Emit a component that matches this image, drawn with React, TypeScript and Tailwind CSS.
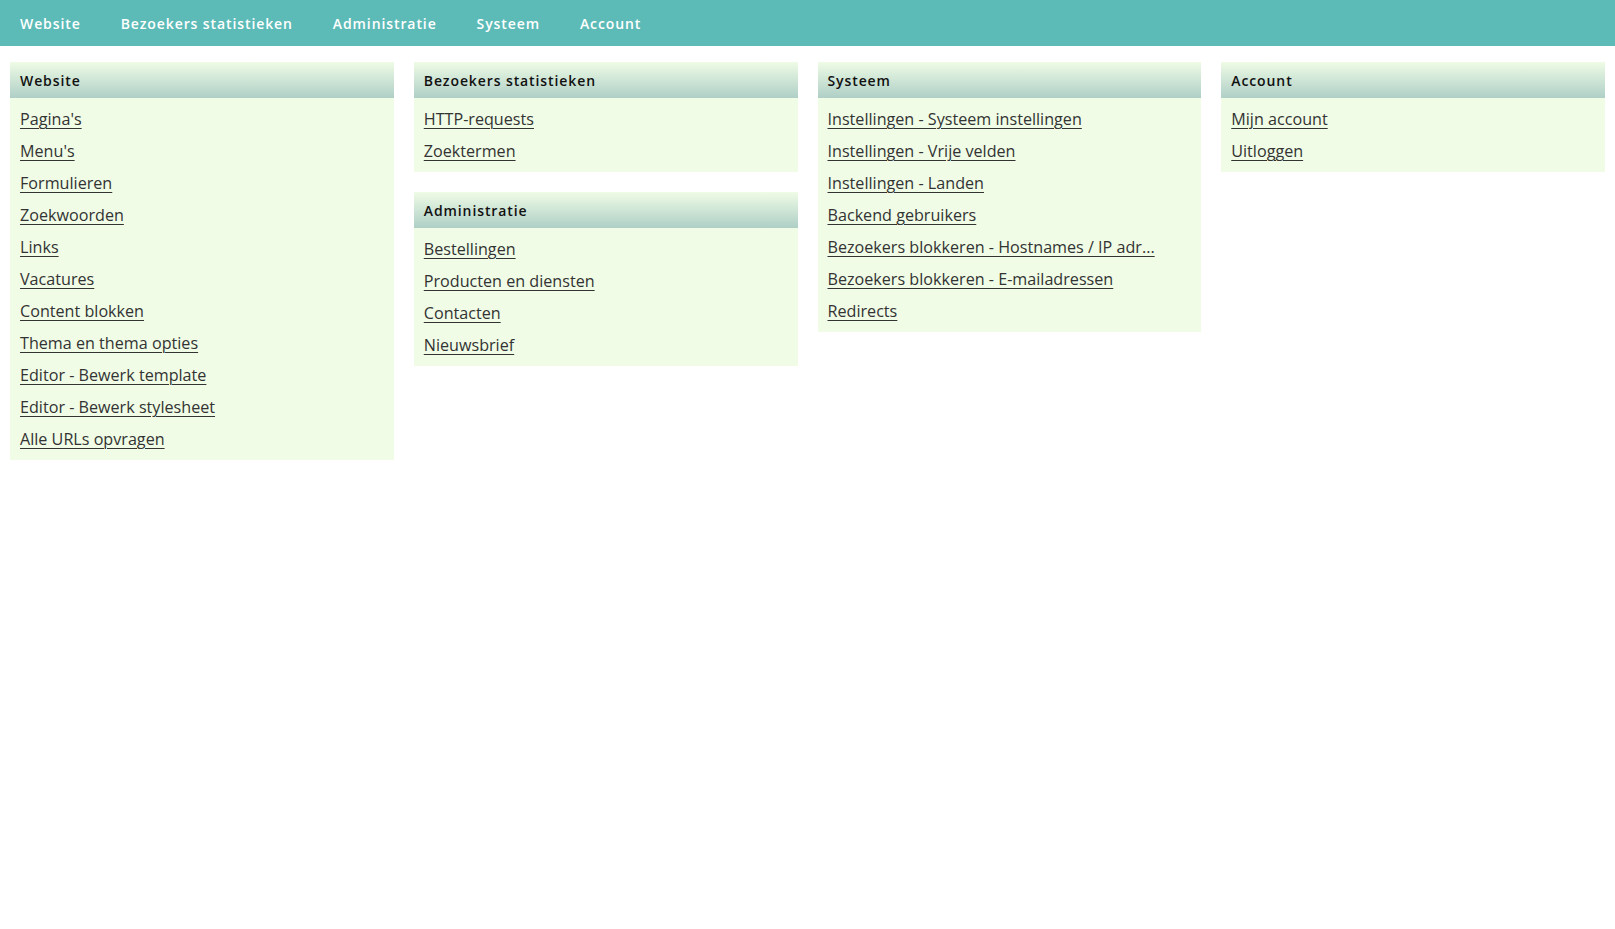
const nav = ["Website", "Bezoekers statistieken", "Administratie", "Systeem", "Account"];

type Panel = { title: string; links: string[] };

const columns: Panel[][] = [
  [
    {
      title: "Website",
      links: [
        "Pagina's",
        "Menu's",
        "Formulieren",
        "Zoekwoorden",
        "Links",
        "Vacatures",
        "Content blokken",
        "Thema en thema opties",
        "Editor - Bewerk template",
        "Editor - Bewerk stylesheet",
        "Alle URLs opvragen",
      ],
    },
  ],
  [
    { title: "Bezoekers statistieken", links: ["HTTP-requests", "Zoektermen"] },
    {
      title: "Administratie",
      links: ["Bestellingen", "Producten en diensten", "Contacten", "Nieuwsbrief"],
    },
  ],
  [
    {
      title: "Systeem",
      links: [
        "Instellingen - Systeem instellingen",
        "Instellingen - Vrije velden",
        "Instellingen - Landen",
        "Backend gebruikers",
        "Bezoekers blokkeren - Hostnames / IP adr...",
        "Bezoekers blokkeren - E-mailadressen",
        "Redirects",
      ],
    },
  ],
  [{ title: "Account", links: ["Mijn account", "Uitloggen"] }],
];

const PanelBox = ({ panel }: { panel: Panel }) => (
  <div className="bg-[#f0fce6]">
    <div className="h-9 flex items-center px-[10px] bg-gradient-to-b from-[#effce6] to-[#afcfc6] text-[14px] font-semibold tracking-[0.9px] text-[#111]">
      {panel.title}
    </div>
    <ul className="py-[5px]">
      {panel.links.map((l) => (
        <li key={l} className="h-8 flex items-center px-[10px]">
          <a href="#" className="text-[16.15px] text-[#333] underline underline-offset-[3px] decoration-[1px]">
            {l}
          </a>
        </li>
      ))}
    </ul>
  </div>
);

export default function App() {
  return (
    <div className="min-h-screen bg-white font-['Open_Sans',sans-serif]">
      <nav className="h-[46px] bg-[#5cbbb7] flex items-center">
        {nav.map((n) => (
          <a key={n} href="#" className="px-5 text-[14px] font-semibold tracking-[0.9px] text-white">
            {n}
          </a>
        ))}
      </nav>
      <div className="grid grid-cols-4 gap-5 px-[10px] pt-4">
        {columns.map((col, i) => (
          <div key={i} className="flex flex-col gap-5 items-stretch self-start">
            {col.map((p) => (
              <PanelBox key={p.title} panel={p} />
            ))}
          </div>
        ))}
      </div>
    </div>
  );
}
